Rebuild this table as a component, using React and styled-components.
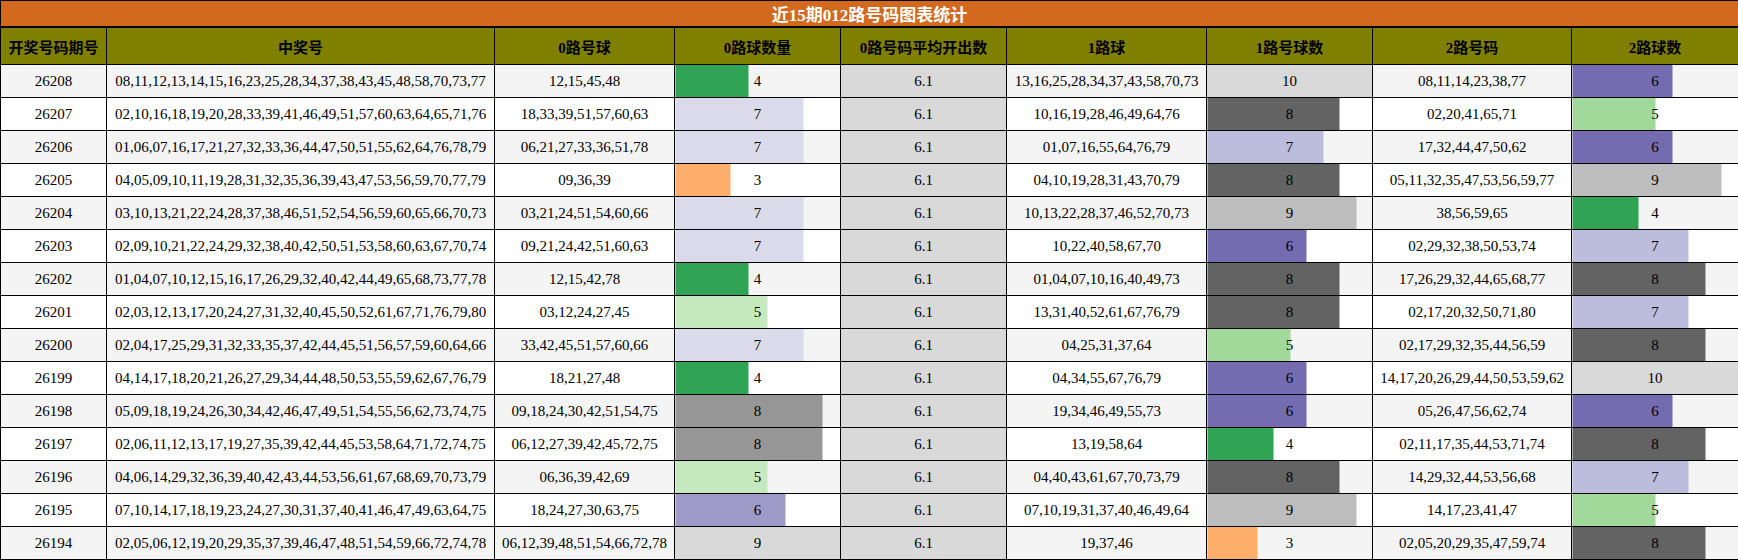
import styled, { createGlobalStyle } from "styled-components";

const GlobalStyle = createGlobalStyle`
  html, body {
    margin: 0;
    padding: 0;
    background: #ffffff;
  }
  body {
    font-family: "Liberation Serif", "Noto Sans CJK SC", serif;
  }
`

const Tabla = styled.table`
  width: 1738px;
  border-collapse: collapse;
  table-layout: fixed;
  font-family: "Liberation Serif", "Noto Sans CJK SC", serif;
  font-size: 15px;
  color: #000;
`

const Columna = styled.col`
  width: ${({ $ancho }) => $ancho}px;
`

const Titulo = styled.th`
  background: #d2691e;
  color: #ffffff;
  font-size: 17px;
  font-weight: bold;
  height: 25px;
  padding: 0;
  border: 1px solid #000;
  border-bottom: 2px solid #000;
  text-align: center;
`

const Encabezado = styled.th`
  background: #808000;
  color: #000;
  font-size: 15px;
  font-weight: bold;
  height: 36px;
  padding: 0 4px;
  border: 1px solid #000;
  text-align: center;
  white-space: nowrap;
`

const Fila = styled.tr`
  background: ${({ $gris }) => $gris ? "#f4f4f4" : "#ffffff"};
`

const Celda = styled.td`
  height: 32px;
  padding: 0 4px;
  border: 1px solid #000;
  text-align: center;
  white-space: nowrap;
`

const CeldaBarra = styled(Celda)`
  background: linear-gradient(90deg, ${({ $color }) => $color} ${({ $pct }) => $pct}%, transparent ${({ $pct }) => $pct}%);
`

const CeldaPromedio = styled(Celda)`
  background: #d9d9d9;
`

// colores de barra por columna
const colores0 = {
  3: "#fdae6b", 4: "#31a354", 5: "#c7e9c0", 6: "#9e9ac8",
  7: "#dadaeb", 8: "#969696", 9: "#d9d9d9",
}
const colores12 = {
  3: "#fdae6b", 4: "#31a354", 5: "#a1d99b", 6: "#756bb1",
  7: "#bcbddc", 8: "#636363", 9: "#bdbdbd", 10: "#d9d9d9",
}

const columnas = [106, 388, 180, 166, 166, 200, 166, 199, 167]

const titulos = [
  "开奖号码期号", "中奖号", "0路号球", "0路球数量", "0路号码平均开出数",
  "1路球", "1路号球数", "2路号码", "2路球数",
]

const datos = [
  ["26208", "08,11,12,13,14,15,16,23,25,28,34,37,38,43,45,48,58,70,73,77", "12,15,45,48", 4, "13,16,25,28,34,37,43,58,70,73", 10, "08,11,14,23,38,77", 6],
  ["26207", "02,10,16,18,19,20,28,33,39,41,46,49,51,57,60,63,64,65,71,76", "18,33,39,51,57,60,63", 7, "10,16,19,28,46,49,64,76", 8, "02,20,41,65,71", 5],
  ["26206", "01,06,07,16,17,21,27,32,33,36,44,47,50,51,55,62,64,76,78,79", "06,21,27,33,36,51,78", 7, "01,07,16,55,64,76,79", 7, "17,32,44,47,50,62", 6],
  ["26205", "04,05,09,10,11,19,28,31,32,35,36,39,43,47,53,56,59,70,77,79", "09,36,39", 3, "04,10,19,28,31,43,70,79", 8, "05,11,32,35,47,53,56,59,77", 9],
  ["26204", "03,10,13,21,22,24,28,37,38,46,51,52,54,56,59,60,65,66,70,73", "03,21,24,51,54,60,66", 7, "10,13,22,28,37,46,52,70,73", 9, "38,56,59,65", 4],
  ["26203", "02,09,10,21,22,24,29,32,38,40,42,50,51,53,58,60,63,67,70,74", "09,21,24,42,51,60,63", 7, "10,22,40,58,67,70", 6, "02,29,32,38,50,53,74", 7],
  ["26202", "01,04,07,10,12,15,16,17,26,29,32,40,42,44,49,65,68,73,77,78", "12,15,42,78", 4, "01,04,07,10,16,40,49,73", 8, "17,26,29,32,44,65,68,77", 8],
  ["26201", "02,03,12,13,17,20,24,27,31,32,40,45,50,52,61,67,71,76,79,80", "03,12,24,27,45", 5, "13,31,40,52,61,67,76,79", 8, "02,17,20,32,50,71,80", 7],
  ["26200", "02,04,17,25,29,31,32,33,35,37,42,44,45,51,56,57,59,60,64,66", "33,42,45,51,57,60,66", 7, "04,25,31,37,64", 5, "02,17,29,32,35,44,56,59", 8],
  ["26199", "04,14,17,18,20,21,26,27,29,34,44,48,50,53,55,59,62,67,76,79", "18,21,27,48", 4, "04,34,55,67,76,79", 6, "14,17,20,26,29,44,50,53,59,62", 10],
  ["26198", "05,09,18,19,24,26,30,34,42,46,47,49,51,54,55,56,62,73,74,75", "09,18,24,30,42,51,54,75", 8, "19,34,46,49,55,73", 6, "05,26,47,56,62,74", 6],
  ["26197", "02,06,11,12,13,17,19,27,35,39,42,44,45,53,58,64,71,72,74,75", "06,12,27,39,42,45,72,75", 8, "13,19,58,64", 4, "02,11,17,35,44,53,71,74", 8],
  ["26196", "04,06,14,29,32,36,39,40,42,43,44,53,56,61,67,68,69,70,73,79", "06,36,39,42,69", 5, "04,40,43,61,67,70,73,79", 8, "14,29,32,44,53,56,68", 7],
  ["26195", "07,10,14,17,18,19,23,24,27,30,31,37,40,41,46,47,49,63,64,75", "18,24,27,30,63,75", 6, "07,10,19,31,37,40,46,49,64", 9, "14,17,23,41,47", 5],
  ["26194", "02,05,06,12,19,20,29,35,37,39,46,47,48,51,54,59,66,72,74,78", "06,12,39,48,51,54,66,72,78", 9, "19,37,46", 3, "02,05,20,29,35,47,59,74", 8],
]

const max0 = Math.max(...datos.map(d => d[3]))
const max1 = Math.max(...datos.map(d => d[5]))
const max2 = Math.max(...datos.map(d => d[7]))

const Barra = ({ valor, max, colores }) => (
  <CeldaBarra $color={colores[valor]} $pct={(valor / max * 100).toFixed(1)}>
    {valor}
  </CeldaBarra>
)

export default function App() {
  return (
    <>
      <GlobalStyle />
      <Tabla>
        <colgroup>
          {columnas.map((a, i) => <Columna key={i} $ancho={a} />)}
        </colgroup>
        <thead>
          <tr>
            <Titulo colSpan={9}>近15期012路号码图表统计</Titulo>
          </tr>
          <tr>
            {titulos.map(t => <Encabezado key={t}>{t}</Encabezado>)}
          </tr>
        </thead>
        <tbody>
          {datos.map((d, i) => (
            <Fila key={d[0]} $gris={i % 2 === 0}>
              <Celda>{d[0]}</Celda>
              <Celda>{d[1]}</Celda>
              <Celda>{d[2]}</Celda>
              <Barra valor={d[3]} max={max0} colores={colores0} />
              <CeldaPromedio>6.1</CeldaPromedio>
              <Celda>{d[4]}</Celda>
              <Barra valor={d[5]} max={max1} colores={colores12} />
              <Celda>{d[6]}</Celda>
              <Barra valor={d[7]} max={max2} colores={colores12} />
            </Fila>
          ))}
        </tbody>
      </Tabla>
    </>
  )
}
